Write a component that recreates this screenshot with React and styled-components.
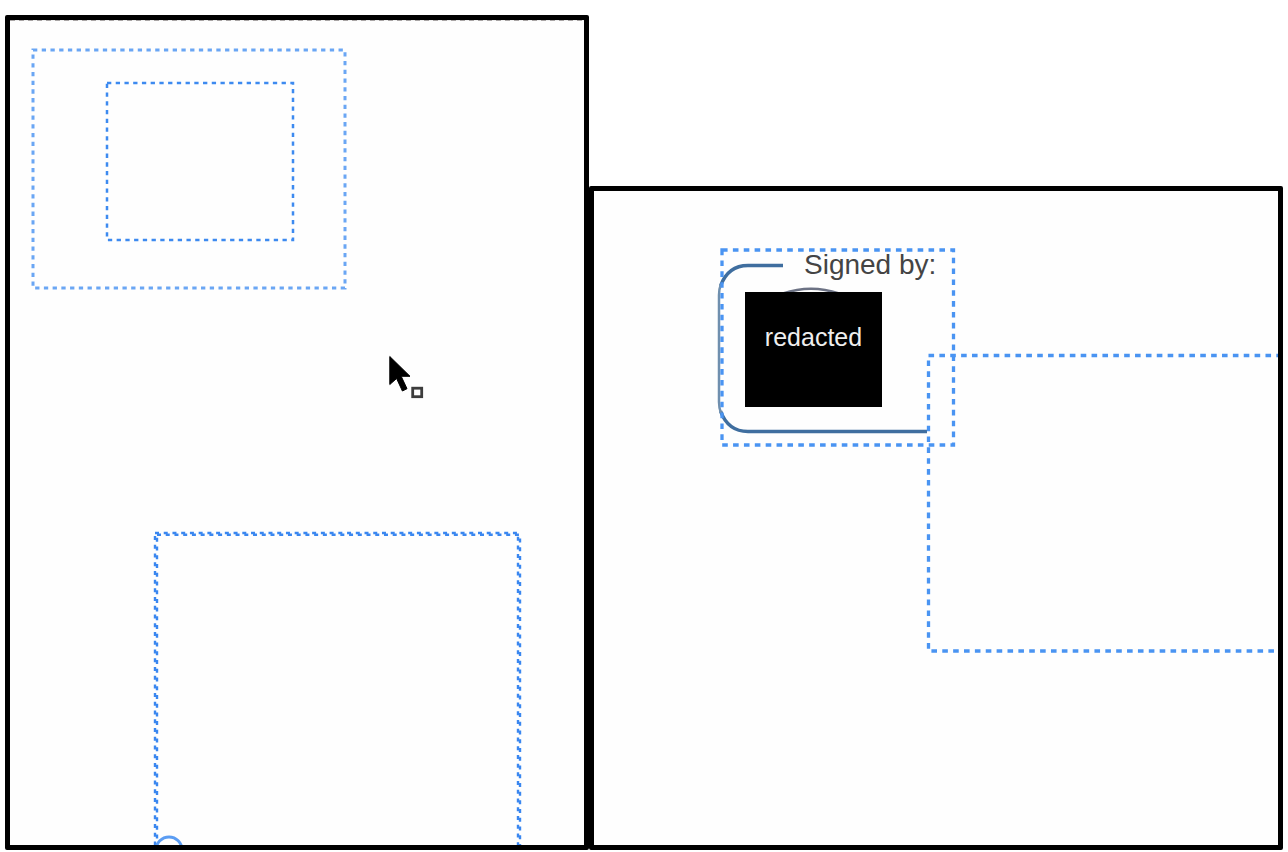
import React from "react";
import styled, { createGlobalStyle } from "styled-components";

const leftFrames = [
	{ x: 23, y: 30, width: 312, height: 238, color: "#6aa6f4", stroke: 3 },
	{ x: 97, y: 63, width: 186, height: 157, color: "#3d8af0", stroke: 2.5 },
];

const rightFrames = [
	{ x: 128, y: 59, width: 231.5, height: 195 },
	{ x: 334.5, y: 164.5, width: 400, height: 295.5 },
];

const Frame = ({
	x,
	y,
	width,
	height,
	color = "#4a94f2",
	stroke = 3,
	dash = "4.3 4.43",
	double = false,
}) => {
	return (
		<Layer $x={Math.floor(x) - 4} $y={Math.floor(y) - 4} width={width + 12} height={height + 12}>
			<g fill="none" stroke={color} strokeWidth={stroke} strokeDasharray={dash}>
				<rect x={4 + (x % 1)} y={4 + (y % 1)} width={width} height={height} />
				{double && <rect x="6" y="5.8" width={width} height={height} />}
			</g>
		</Layer>
	);
};

const Cursor = () => {
	return (
		<Layer $x={377} $y={334} width="40" height="48">
			<path
				d="M2.8 2.5 V30.5 L9.6 24.5 L15.4 37 L20 34.7 L14.2 22.3 H23 Z"
				fill="#000"
				stroke="#000"
				strokeLinejoin="round"
			/>
			<rect x="25.7" y="34.2" width="9" height="8.5" fill="#fff" stroke="#3c3c3c" strokeWidth="2.8" />
		</Layer>
	);
};

const Signature = () => {
	return (
		<SignatureCard>
			<Bracket width="220" height="190">
				<g fill="none" stroke="#3f6e9f" strokeWidth="3.5">
					<path d="M69 14.5 H34 Q14 14.5 6.5 35" />
					<path d="M6.5 160 Q14 180.5 34 180.5 H213" />
				</g>
				<path d="M7 33 Q5 38 5 44 V151 Q5 157 7 162" fill="none" stroke="#6f8fae" strokeWidth="2.5" />
				<path d="M69 42.5 Q97 33 125 42.5" fill="none" stroke="#6c7284" strokeWidth="2.5" />
			</Bracket>
			<SignedBy>Signed by:</SignedBy>
			<Redacted>redacted</Redacted>
		</SignatureCard>
	);
};

const App = () => {
	return (
		<>
			<GlobalStyle />
			<Page>
				<Panel>
					<TopEdge />
					{leftFrames.map((frame) => (
						<Frame key={frame.x} {...frame} />
					))}
					<Frame
						x={145}
						y={513}
						width={363}
						height={400}
						color="#3a87f0"
						stroke={2.4}
						dash="4 4.73"
						double
					/>
					<Layer $x={143} $y={813} width="32" height="32">
						<circle cx="16" cy="17" r="13" fill="#fff" stroke="#5b9df3" strokeWidth="3" />
					</Layer>
					<Cursor />
				</Panel>
				<Panel $lowered>
					<Signature />
					{rightFrames.map((frame) => (
						<Frame key={frame.x} {...frame} stroke={3.3} dash="5.6 5.27" />
					))}
				</Panel>
			</Page>
		</>
	);
};

export default App;

const GlobalStyle = createGlobalStyle`
	* {
		box-sizing: border-box;
	}

	body {
		margin: 0;
		background: #fff;
		font-family: "Liberation Sans", Arial, sans-serif;
	}
`;

const Page = styled.main`
	display: grid;
	grid-template-columns: 584fr 694fr;
	min-height: 100vh;
	padding: 15px 5px 2px;
`;

const Panel = styled.section`
	position: relative;
	overflow: hidden;
	margin-top: ${({ $lowered }) => ($lowered ? "171px" : "0")};
	border: 5px solid #000;
	border-radius: 2px;
	background: #fefefe;
`;

const TopEdge = styled.div`
	height: 1px;
	background: repeating-linear-gradient(90deg, #a8a4a4 0 5px, #eee 5px 9px);
`;

const Layer = styled.svg`
	position: absolute;
	left: ${({ $x }) => $x}px;
	top: ${({ $y }) => $y}px;
`;

const SignatureCard = styled.div`
	display: grid;
	grid-template-rows: 32px auto;
	justify-content: start;
	row-gap: 11px;
	padding: 58px 0 0 120px;
`;

const Bracket = styled.svg`
	grid-area: 1 / 1 / 3 / 2;
	margin-top: 2px;
`;

const SignedBy = styled.span`
	grid-area: 1 / 1;
	padding-left: 90px;
	font-size: 28px;
	line-height: 32px;
	color: #444;
	white-space: nowrap;
`;

const Redacted = styled.div`
	grid-area: 2 / 1;
	width: 137px;
	height: 115px;
	margin-left: 31px;
	padding-top: 30px;
	background: #000;
	color: #eee;
	font-size: 25px;
	line-height: 30px;
	text-align: center;
`;
